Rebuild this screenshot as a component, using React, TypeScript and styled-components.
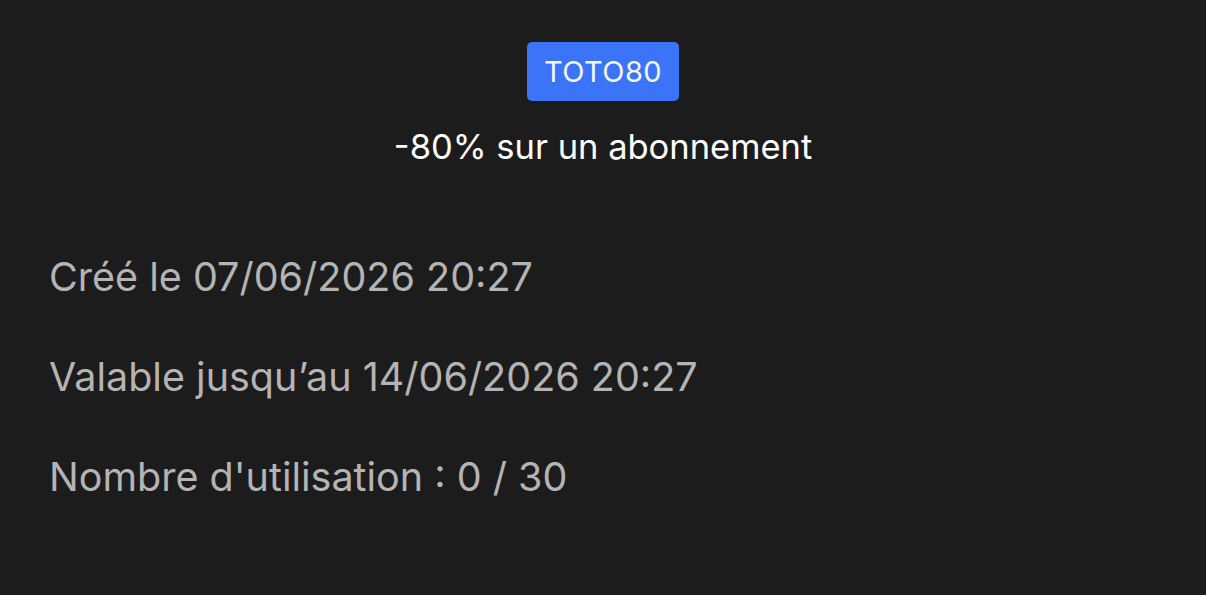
import styled, { createGlobalStyle } from "styled-components";

const GlobalStyle = createGlobalStyle`
  html, body {
    margin: 0;
    padding: 0;
    background: #1c1c1c;
  }
  body {
    font-family: Inter, "Noto Sans", sans-serif;
    -webkit-font-smoothing: antialiased;
  }
`;

type Coupon = {
  code: string;
  label: string;
  createdAt: string;
  validUntil: string;
  used: number;
  max: number;
};

const coupon: Coupon = {
  code: "TOTO80",
  label: "-80% sur un abonnement",
  createdAt: "07/06/2026 20:27",
  validUntil: "14/06/2026 20:27",
  used: 0,
  max: 30,
};

export default function App() {
  return (
    <>
      <GlobalStyle />
      <Card>
        <Header>
          <CodeBadge>{coupon.code}</CodeBadge>
          <Label>{coupon.label}</Label>
        </Header>
        <Details>
          <Line>Créé le {coupon.createdAt}</Line>
          <Line>Valable jusqu’au {coupon.validUntil}</Line>
          <Line>
            Nombre d'utilisation : {coupon.used} / {coupon.max}
          </Line>
        </Details>
      </Card>
    </>
  );
}

const Card = styled.div`
  width: 1206px;
  height: 595px;
  box-sizing: border-box;
  background: #1c1c1c;
  padding: 42px 49px 0;
  display: flex;
  flex-direction: column;
`;

const Header = styled.div`
  display: flex;
  flex-direction: column;
  align-items: center;
  gap: 26px;
`;

const CodeBadge = styled.div`
  background: #3b74f6;
  color: #f4f7ff;
  border-radius: 5px;
  height: 59px;
  width: 152px;
  box-sizing: border-box;
  display: flex;
  align-items: center;
  justify-content: center;
  font-size: 29px;
  letter-spacing: 0.4px;
`;

const Label = styled.div`
  color: #ffffff;
  font-size: 34.5px;
  line-height: 40px;
`;

const Details = styled.div`
  margin-top: 85px;
  display: flex;
  flex-direction: column;
  gap: 50px;
`;

const Line = styled.div`
  color: #b4b4b4;
  font-size: 39.5px;
  line-height: 50px;
`;
